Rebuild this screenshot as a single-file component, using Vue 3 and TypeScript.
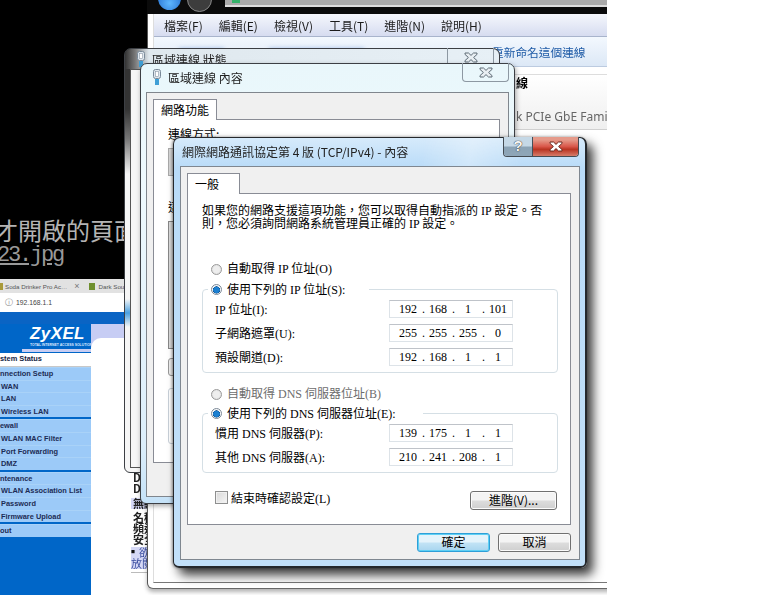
<script setup lang="ts">
// Stacked Windows 7 network dialogs over a router admin page.
interface IpRow {
  label: string
  octets: string[]
}
interface NavGroup {
  head: string
  items: string[]
}

const menus = ['檔案(F)', '編輯(E)', '檢視(V)', '工具(T)', '進階(N)', '說明(H)']

const ipRows: IpRow[] = [
  { label: 'IP 位址(I):', octets: ['192', '168', '1', '101'] },
  { label: '子網路遮罩(U):', octets: ['255', '255', '255', '0'] },
  { label: '預設閘道(D):', octets: ['192', '168', '1', '1'] },
]
const dnsRows: IpRow[] = [
  { label: '慣用 DNS 伺服器(P):', octets: ['139', '175', '1', '1'] },
  { label: '其他 DNS 伺服器(A):', octets: ['210', '241', '208', '1'] },
]

const nav: NavGroup[] = [
  { head: 'nnection Setup', items: ['WAN', 'LAN', 'Wireless LAN'] },
  { head: 'ewall', items: ['WLAN MAC Filter', 'Port Forwarding', 'DMZ'] },
  { head: 'ntenance', items: ['WLAN Association List', 'Password', 'Firmware Upload'] },
  { head: 'out', items: [] },
]

const pageLines = ['D', 'D', '無線', '名稱', '頻道', '安全']
const xPath = 'M1 1h3.5L7 3.4 9.5 1H13v1.4L9.6 5.5 13 8.6V10H9.5L7 7.6 4.5 10H1V8.6l3.4-3.1L1 2.4z'
</script>

<template>
  <div class="desk">
    <div class="shot">
      <!-- black terminal-like backdrop -->
      <div class="backdrop">
        <div class="big">才開啟的頁面</div>
        <div class="file">23.jpg</div>
      </div>

      <!-- browser with router page -->
      <div class="browser">
        <div class="tabs">
          <i class="fav"></i><span class="tab-t">Soda Drinker Pro Ac…</span><span class="tab-x">×</span>
          <i class="fav green"></i><span class="tab-t">Dark Souls</span>
        </div>
        <div class="url"><span class="info">ⓘ</span><span>192.168.1.1</span></div>
        <div class="strip"></div>
        <div class="page">
          <div class="side">
            <div class="logo">
              <div class="zy">ZyXEL</div>
              <div class="zy-sub">TOTAL INTERNET ACCESS SOLUTION</div>
            </div>
            <div class="logo-line"></div>
            <div class="status">stem Status</div>
            <div v-for="g in nav" :key="g.head" class="nav-group">
              <div class="nav-row">{{ g.head }}</div>
              <div v-for="it in g.items" :key="it" class="nav-row sub">{{ it }}</div>
            </div>
          </div>
          <div class="main">
            <div class="lav"></div>
            <div class="main-body">
              <div class="lines">
                <div v-for="(l, i) in pageLines" :key="i" class="ln" :class="{ hl: l === '無線' }">{{ l }}</div>
                <div class="ln hl gap"><span class="bullet">■</span>欲</div>
                <div class="ln hl blue">放閱</div>
                <div class="rule"></div>
              </div>
            </div>
          </div>
        </div>
      </div>

      <!-- explorer window behind -->
      <div class="explorer">
        <div class="ex-top">
          <i class="nav-ball blue"></i><i class="nav-ball grey"></i>
          <div class="addr"><i></i></div>
        </div>
        <div class="ex-client">
          <div class="menubar">
            <span v-for="m in menus" :key="m">{{ m }}</span>
          </div>
          <div class="toolbar">
            <span class="blur-a"></span><span class="blur-b"></span>
            <span class="tool-t">重新命名這個連線</span>
          </div>
          <div class="ex-head">
            <div class="ex-name">線</div>
            <div class="ex-dev">k PCIe GbE Fami</div>
          </div>
        </div>
      </div>

      <!-- status window -->
      <div class="win status-win">
        <div class="cap">
          <svg class="plug" viewBox="0 0 10 16" width="10" height="16"><rect x="1.5" y="0.5" width="7" height="9" rx="2" fill="#dfe7ee" stroke="#7a8a99"/><rect x="3.5" y="2.5" width="3" height="5" fill="#fff" stroke="#8a98a6" stroke-width="0.6"/><rect x="3" y="10" width="4" height="6" fill="#3f9fd6"/></svg>
          <span class="cap-t">區域連線 狀態</span>
          <div class="x-btn pale"><svg viewBox="0 0 14 11" width="14" height="11"><path :d="xPath" fill="#e8eef2" stroke="#5d6a75"/></svg></div>
        </div>
        <div class="win-body status-body"></div>
      </div>

      <!-- properties window -->
      <div class="win props-win">
        <div class="cap">
          <svg class="plug" viewBox="0 0 10 16" width="10" height="16"><rect x="1.5" y="0.5" width="7" height="9" rx="2" fill="#dfe7ee" stroke="#7a8a99"/><rect x="3.5" y="2.5" width="3" height="5" fill="#fff" stroke="#8a98a6" stroke-width="0.6"/><rect x="3" y="10" width="4" height="6" fill="#3f9fd6"/></svg>
          <span class="cap-t">區域連線 內容</span>
          <div class="x-btn pale"><svg viewBox="0 0 14 11" width="14" height="11"><path :d="xPath" fill="#e8eef2" stroke="#5d6a75"/></svg></div>
        </div>
        <div class="win-body props-body">
          <div class="tab">網路功能</div>
          <div class="tab-panel props-panel">
            <div class="conn">連線方式:</div>
            <div class="conn-box"></div>
            <div class="conn this">這</div>
            <div class="list-box"></div>
            <div class="btn-stub small"></div>
            <div class="btn-stub tall"></div>
          </div>
        </div>
      </div>

      <!-- TCP/IPv4 dialog -->
      <div class="win dlg">
        <div class="dlg-cap">
          <span class="dlg-title">網際網路通訊協定第 4 版 (TCP/IPv4) - 內容</span>
          <div class="cap-btns">
            <div class="help">?</div>
            <div class="close"><svg viewBox="0 0 14 11" width="14" height="11"><path :d="xPath" fill="#fff" stroke="#6a2a20"/></svg></div>
          </div>
        </div>
        <div class="dlg-client">
          <div class="tab dlg-tab">一般</div>
          <div class="panel">
            <p class="intro">如果您的網路支援這項功能，您可以取得自動指派的 IP 設定。否<br>則，您必須詢問網路系統管理員正確的 IP 設定。</p>

            <label class="opt first"><i class="radio"></i>自動取得 IP 位址(O)</label>
            <div class="group">
              <label class="legend lg-ip"><i class="radio on"></i>使用下列的 IP 位址(S):</label>
              <div v-for="r in ipRows" :key="r.label" class="row">
                <span>{{ r.label }}</span>
                <div class="field">
                  <template v-for="(o, i) in r.octets" :key="i">
                    <span class="oct">{{ o }}</span><span v-if="i < 3" class="dot">.</span>
                  </template>
                </div>
              </div>
            </div>

            <label class="opt second disabled"><i class="radio"></i>自動取得 DNS 伺服器位址(B)</label>
            <div class="group dns">
              <label class="legend lg-dns"><i class="radio on"></i>使用下列的 DNS 伺服器位址(E):</label>
              <div v-for="r in dnsRows" :key="r.label" class="row">
                <span>{{ r.label }}</span>
                <div class="field">
                  <template v-for="(o, i) in r.octets" :key="i">
                    <span class="oct">{{ o }}</span><span v-if="i < 3" class="dot">.</span>
                  </template>
                </div>
              </div>
            </div>

            <div class="check-row">
              <label class="check"><i class="box"></i>結束時確認設定(L)</label>
              <button class="btn adv">進階(V)...</button>
            </div>
          </div>
          <div class="actions">
            <button class="btn ok">確定</button>
            <button class="btn cancel">取消</button>
          </div>
        </div>
      </div>
    </div>
  </div>
</template>

<style>
html, body { margin: 0; background: #fff; }
</style>

<style scoped>
.desk {
  width: 768px;
  height: 614px;
  background: #fff;
  overflow: hidden;
  font-family: "Liberation Serif", "Noto Sans CJK TC", serif;
  font-size: 12px;
  color: #000;
}
.shot {
  position: relative;
  width: 607px;
  height: 595px;
  overflow: hidden;
}
.backdrop {
  position: absolute;
  left: 0;
  top: 0;
  width: 150px;
  height: 279px;
  background: #000;
  overflow: hidden;
  color: #b4b4b4;
}
.big {
  position: absolute;
  left: -6px;
  top: 215px;
  white-space: nowrap;
  font: 24px/30px "Noto Sans CJK TC", sans-serif;
}
.file {
  position: absolute;
  left: -3px;
  top: 244px;
  white-space: nowrap;
  font: 22px/24px "Liberation Mono", monospace;
  letter-spacing: -2.2px;
  text-decoration: underline;
  color: #999;
}

/* browser */
.browser {
  position: absolute;
  left: 0;
  top: 279px;
  width: 150px;
  height: 316px;
  display: flex;
  flex-direction: column;
  background: #fff;
  filter: blur(0.35px);
  font-family: "Liberation Sans", sans-serif;
}
.tabs {
  height: 14px;
  background: #e2e2e2;
  display: flex;
  align-items: center;
  font-size: 6.2px;
  color: #555;
  white-space: nowrap;
  overflow: hidden;
}
.fav {
  width: 6px;
  height: 7px;
  margin-left: -3px;
  margin-right: 2px;
  background: #a99a3a;
  flex: none;
}
.fav.green {
  margin-left: 9px;
  margin-right: 4px;
  background: #6f8f2e;
}
.tab-t { flex: none; }
.tab-x {
  margin-left: 7px;
  font-size: 9px;
  color: #777;
}
.url {
  height: 19px;
  display: flex;
  align-items: center;
  gap: 3px;
  padding-left: 5px;
  font-size: 6.8px;
  color: #444;
}
.info {
  font-size: 8px;
  color: #888;
}
.strip {
  height: 12px;
  background: #0a64c4;
}
.page {
  flex: 1;
  display: flex;
  min-height: 0;
}
.side {
  width: 91px;
  flex: none;
  background: #0066c8;
  display: flex;
  flex-direction: column;
  font: bold 7.4px/12.6px "Liberation Sans", sans-serif;
  color: #1c2c55;
  white-space: nowrap;
  overflow: hidden;
}
.logo {
  height: 23px;
  padding: 1px 0 0 30px;
  color: #fff;
}
.zy {
  font: italic 900 17px/18px "Liberation Sans", sans-serif;
  letter-spacing: 0.4px;
}
.zy-sub {
  font-size: 3.4px;
  line-height: 5px;
  color: #dfe9ff;
}
.logo-line {
  height: 3px;
  margin: 1px 0 1px 22px;
  background: #c7cdf2;
}
.status {
  height: 13px;
  background: #fff;
  border-bottom: 1px solid #c8c8c8;
  color: #14233f;
}
.nav-group {
  display: flex;
  flex-direction: column;
  background: #9ccaf8;
  margin-bottom: 2px;
}
.nav-group:last-child { margin-bottom: 0; }
.nav-row {
  height: 12.6px;
  border-top: 1px solid #a9d2f8;
  box-sizing: border-box;
}
.sub { padding-left: 1px; }
.main {
  flex: 1;
  display: flex;
  flex-direction: column;
  background: #c7cdf4;
}
.lav { height: 14px; }
.main-body {
  flex: 1;
  background: #fff;
  border-top-left-radius: 10px;
}
.lines {
  margin: 134px 0 0 40px;
  width: 20px;
  font: bold 11px/11px "Noto Sans CJK TC", sans-serif;
  color: #222;
  white-space: nowrap;
  overflow: hidden;
}
.ln {
  height: 11px;
  padding-left: 2px;
}
.ln:nth-child(3) { margin-top: 4px; }
.ln:nth-child(4) { margin-top: 3px; }
.hl { background: #d5d8f6; }
.gap {
  margin-top: 2px;
  color: #3a4ea0;
  font-weight: 400;
  padding-left: 0;
  display: flex;
  align-items: center;
}
.bullet {
  width: 8px;
  flex: none;
  font-size: 4px;
  color: #111;
}
.blue {
  color: #3a4ea0;
  font-weight: 400;
  padding-left: 0;
}
.rule {
  margin-top: 3px;
  height: 1px;
  background: #bbb;
}

/* explorer */
.explorer {
  position: absolute;
  left: 147px;
  top: 0;
  width: 480px;
  height: 589px;
  background: #fff;
  border-left: 1px solid #555;
  border-bottom: 1px solid #666;
  border-radius: 0 0 6px 6px;
  box-shadow: 0 3px 4px rgba(0, 0, 0, 0.3);
  box-sizing: border-box;
}
.ex-top {
  height: 14px;
  background: #0b0b0b;
  position: relative;
  margin-left: -1px;
}
.nav-ball {
  position: absolute;
  top: -13px;
  width: 23px;
  height: 23px;
  border-radius: 50%;
}
.nav-ball.blue {
  left: 11px;
  background: radial-gradient(circle at 50% 70%, #5fb7ff, #1258c0);
}
.nav-ball.grey {
  left: 40px;
  background: #3d3d3d;
  border: 1px solid #888;
}
.addr {
  position: absolute;
  left: 78px;
  right: 0;
  top: 0;
  height: 7px;
  background: linear-gradient(#aaa 0 5px, #ddd 5px 7px);
}
.addr i {
  position: absolute;
  left: 7px;
  top: 0;
  width: 8px;
  height: 3px;
  background: #35b26a;
}
.ex-client {
  margin-left: 5px;
  height: 568px;
  border-left: 1px solid #ddd;
  border-bottom: 1px solid #777;
}
.menubar {
  height: 23px;
  display: flex;
  align-items: center;
  gap: 16px;
  padding-left: 10px;
  background: linear-gradient(#f5f7fc, #d6dcf0);
  border-bottom: 1px solid #a8b4cc;
  color: #1c1c1c;
  font-family: "Noto Sans CJK TC", sans-serif;
  box-sizing: border-box;
}
.toolbar {
  height: 30px;
  position: relative;
  background: linear-gradient(#f3f8fe, #dce8f6);
  border-bottom: 1px solid #bccbe0;
  box-sizing: border-box;
}
.blur-a, .blur-b {
  position: absolute;
  top: 11px;
  height: 9px;
  background: #a7c3ea;
  filter: blur(2px);
}
.blur-a { left: 25px; width: 45px; }
.blur-b { left: 115px; width: 95px; }
.tool-t {
  position: absolute;
  left: 338px;
  top: 6px;
  font: 11.7px/18px "Noto Sans CJK TC", sans-serif;
  color: #1d5aa6;
}
.ex-head {
  margin-top: 7px;
  height: 54px;
  background: linear-gradient(#fff, #efefef);
  border-top: 1px solid #ddd;
  border-bottom: 1px solid #d0d0d0;
  padding-left: 362px;
  box-sizing: content-box;
  font-family: "Noto Sans CJK TC", sans-serif;
}
.ex-name {
  font-weight: 700;
  line-height: 18px;
  margin-top: -1px;
}
.ex-dev {
  margin-top: 17px;
  font: 12px/16px "Noto Sans", sans-serif;
  color: #666;
  white-space: nowrap;
}

/* shared window chrome */
.win {
  position: absolute;
  box-sizing: border-box;
  border: 1px solid #3c3f44;
  border-radius: 7px 7px 6px 6px;
}
.cap {
  height: 28px;
  display: flex;
  align-items: center;
  gap: 6px;
  padding-left: 11px;
  position: relative;
  font-family: "Noto Sans CJK TC", sans-serif;
  color: #222;
}
.plug { flex: none; }
.x-btn {
  position: absolute;
  right: 5px;
  top: -1px;
  width: 47px;
  height: 19px;
  box-sizing: border-box;
  border: 1px solid #8d98a2;
  border-top: none;
  border-radius: 0 0 4px 4px;
  display: flex;
  align-items: center;
  justify-content: center;
}
.status-win {
  left: 124px;
  top: 48px;
  width: 376px;
  height: 425px;
  background: linear-gradient(#333 0 60px, #777 90px, #f6f6f6 125px, #f6f6f6 250px, #4aa0e0 264px, #f6f6f6 278px);
}
.status-win .cap {
  height: 20px;
  background: linear-gradient(90deg, #333, #777 10px, #dfe8ee 24px, #e7f0f6);
  border-radius: 6px 6px 0 0;
}
.status-body {
  margin: 0 5px;
  height: 397px;
  background: #f6f6f6;
  border: 1px solid #555;
}
.props-win {
  left: 140px;
  top: 63px;
  width: 375px;
  height: 441px;
  background: linear-gradient(#e9f7fb, #eef9fd 120px, #dceefa 380px, #c5e2f8);
  box-shadow: 1px 2px 5px rgba(0, 0, 0, 0.35);
}
.props-win .cap {
  height: 26px;
  margin-bottom: 2px;
}
.props-body {
  margin: 0 5px;
  height: 405px;
  background: #f0f0f0;
  border: 1px solid #80868d;
  padding: 6px 8px 0 6px;
  box-sizing: border-box;
}
.tab {
  box-sizing: border-box;
  background: #fff;
  border: 1px solid #898c95;
  border-bottom: none;
  font-family: "Noto Sans CJK TC", sans-serif;
  padding-left: 7px;
  position: relative;
  z-index: 1;
}
.props-body .tab {
  width: 64px;
  height: 21px;
  line-height: 20px;
}
.props-panel {
  margin-top: -1px;
  height: 344px;
  background: #fff;
  border: 1px solid #898c95;
  padding: 6px 0 0 14px;
  box-sizing: border-box;
  display: flex;
  flex-direction: column;
}
.conn {
  font-family: "Noto Sans CJK TC", sans-serif;
  line-height: 16px;
}
.conn-box {
  margin-top: 6px;
  width: 40px;
  height: 28px;
  background: #d9d9d9;
  border: 1px solid #aaa;
  box-sizing: border-box;
}
.conn.this { margin-top: 23px; }
.list-box {
  margin-top: 6px;
  width: 40px;
  height: 128px;
  background: #dcdcdc;
  border: 1px solid #888;
  box-sizing: border-box;
}
.btn-stub {
  width: 40px;
  border: 1px solid #999;
  border-radius: 3px;
  box-sizing: border-box;
  background: #efefef;
}
.btn-stub.small { margin-top: 9px; height: 18px; }
.btn-stub.tall { margin-top: 12px; height: 56px; border-color: #c8d0d8; background: #fff; }

/* main dialog */
.dlg {
  left: 173px;
  top: 137px;
  width: 414px;
  height: 431px;
  background: linear-gradient(#d6eafb, #b9dbf8 30px, #c2e0f9);
  border-color: #25282c;
  border-width: 1px 2px 2px 1px;
  box-shadow: 6px 7px 11px rgba(0, 0, 0, 0.78), -1px 0 3px rgba(0, 0, 0, 0.4);
}
.dlg-cap {
  height: 28px;
  position: relative;
  display: flex;
  align-items: center;
  padding: 0 0 0 8px;
  background: linear-gradient(100deg, transparent 60%, rgba(255, 255, 255, 0.3) 72%, transparent 85%);
}
.dlg-title {
  font-family: "Noto Sans CJK TC", sans-serif;
  color: #222;
  white-space: nowrap;
  margin-top: -1px;
}
.cap-btns {
  position: absolute;
  right: 6px;
  top: -1px;
  display: flex;
  height: 20px;
  border: 1px solid #444b52;
  border-top: none;
  border-radius: 0 0 4px 4px;
  overflow: hidden;
  box-sizing: border-box;
}
.help {
  width: 29px;
  background: linear-gradient(#c5d8e6 0 45%, #8ba3b5 55%, #8fa6b8);
  border-right: 1px solid #44505a;
  box-sizing: border-box;
  text-align: center;
  font: bold 15px/18px "Liberation Sans", sans-serif;
  color: #f5f5f5;
  text-shadow: 0 0 1px #333, 0 0 1px #333;
}
.close {
  width: 45px;
  background: linear-gradient(#e59a8a 0 15%, #d9574a 50%, #b93422 65%, #d67c6a);
  display: flex;
  align-items: center;
  justify-content: center;
}
.dlg-client {
  margin-left: 6px;
  width: 400px;
  height: 394px;
  background: #f0f0f0;
  border: 1px solid #7f8790;
  box-sizing: border-box;
  padding: 6px 8px 0 6px;
  display: flex;
  flex-direction: column;
}
.dlg-tab {
  width: 53px;
  height: 21px;
  line-height: 20px;
}
.panel {
  margin-top: -1px;
  height: 332px;
  flex: none;
  background: #fff;
  border: 1px solid #898c95;
  box-sizing: border-box;
  padding: 11px 12px 0 14px;
  display: flex;
  flex-direction: column;
}
.intro {
  margin: 0;
  line-height: 13px;
  white-space: nowrap;
}
label, .row { display: flex; align-items: center; }
.opt {
  height: 14px;
  line-height: 14px;
  white-space: nowrap;
}
.opt.first { margin: 31px 0 0 9px; }
.opt.second { margin: 14px 0 0 9px; }
.disabled { color: #6d6d6d; }
.radio {
  width: 11px;
  height: 11px;
  flex: none;
  margin-right: 5px;
  border-radius: 50%;
  box-sizing: border-box;
  border: 1px solid #9a9a9a;
  background: radial-gradient(circle at 50% 50%, #eee 0 45%, #d5d5d5 100%);
}
.radio.on {
  border-color: #7d8a98;
  background: radial-gradient(circle at 50% 55%, #1b7fd0 0 3px, #0e4f8e 3.4px, #f4f6f8 3.8px);
}
.group {
  margin-top: 13px;
  border: 1px solid #d5dfe5;
  border-radius: 4px;
  padding: 0 0 6px 12px;
  display: flex;
  flex-direction: column;
  gap: 6px;
}
.group.dns { margin-top: 12px; }
.legend {
  height: 14px;
  margin: -8px 0 -2px -7px;
  padding-left: 3px;
  background: #fff;
  align-self: flex-start;
  white-space: nowrap;
}
.lg-ip { width: 158px; }
.lg-dns { width: 212px; }
.row {
  display: grid;
  grid-template-columns: 174px 124px;
  align-items: center;
  height: 18px;
  white-space: nowrap;
}
.field {
  box-sizing: border-box;
  height: 18px;
  border: 1px solid #dde3e8;
  border-top-color: #bfc3c9;
  display: flex;
  align-items: center;
  padding-left: 4px;
  background: #fff;
}
.oct {
  width: 28px;
  text-align: center;
  flex: none;
}
.dot {
  width: 2px;
  flex: none;
  text-align: center;
}
.check-row {
  margin-top: 18px;
  padding-right: 1px;
  display: flex;
  justify-content: space-between;
  align-items: flex-start;
}
.check {
  margin-left: 13px;
  height: 13px;
  white-space: nowrap;
}
.box {
  width: 13px;
  height: 13px;
  flex: none;
  margin-right: 3px;
  box-sizing: border-box;
  border: 1px solid #8e8f8f;
  background: linear-gradient(135deg, #d8d8d8, #f5f5f5);
  box-shadow: inset 0 0 0 1px #f0f0f0;
}
.btn {
  font: 12px "Noto Sans CJK TC", sans-serif;
  color: #000;
  width: 87px;
  height: 19px;
  padding: 0 0 2px;
  border: 1px solid #707070;
  border-radius: 3px;
  background: linear-gradient(#f4f4f4 0 48%, #dddddd 52%, #cfcfcf);
  box-shadow: inset 0 0 0 1px #fbfbfb;
  line-height: 14px;
}
.actions {
  display: flex;
  justify-content: flex-end;
  gap: 8px;
  margin-top: 8px;
}
.ok, .cancel { width: 73px; }
.ok {
  border-color: #2f9fd8;
  background: linear-gradient(#e4f3fb 0 48%, #c2e3f5 52%, #a8d5ef);
  box-shadow: inset 0 0 0 1px #5fd0f4;
}
</style>
